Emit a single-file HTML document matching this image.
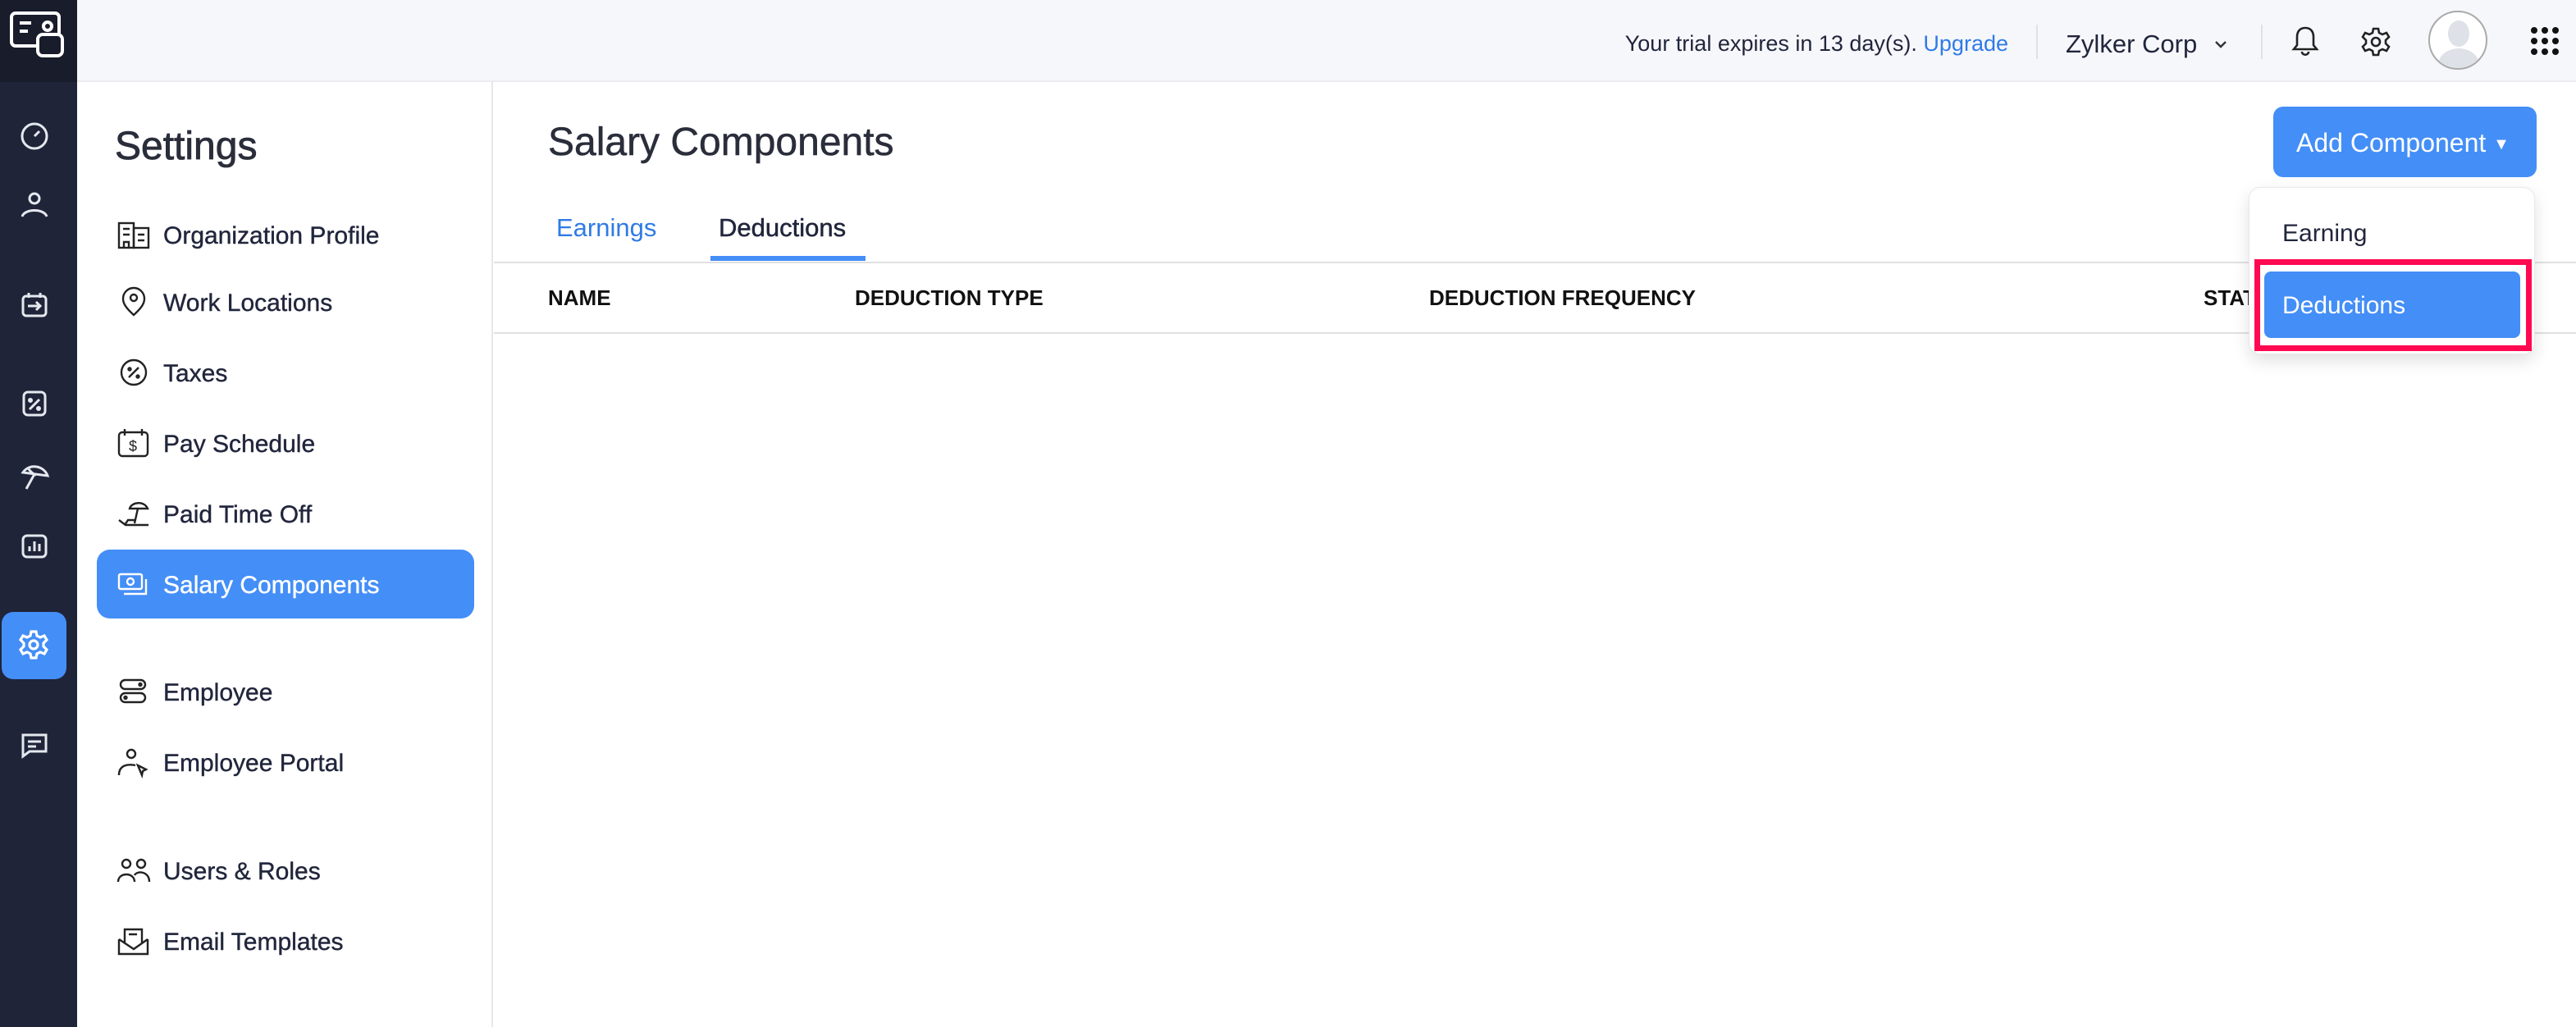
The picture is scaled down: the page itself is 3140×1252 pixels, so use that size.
<!DOCTYPE html>
<html><head><meta charset="utf-8"><style>
*{margin:0;padding:0;box-sizing:border-box}
body{width:3140px;height:1252px;position:relative;background:#fff;font-family:"Liberation Sans",sans-serif;color:#21263c;overflow:hidden}
.abs{position:absolute}
.nav{left:0;top:0;width:94px;height:1252px;background:#1f2439}
.logo{left:0;top:0;width:94px;height:100px;background:#181c2b}
.hdr{left:94px;top:0;width:3046px;height:100px;background:#f6f7fb;border-bottom:2px solid #ebecf0}
.side{left:94px;top:100px;width:507px;height:1152px;border-right:2px solid #e6e7eb}
.mi{position:absolute;left:199px;font-size:30px;color:#21263c;line-height:40px;-webkit-text-stroke:0.4px #21263c}
.ic{position:absolute;left:142px;width:42px;height:40px}
svg{overflow:visible}
.th{position:absolute;top:347px;font-size:26px;font-weight:bold;color:#111;line-height:32px}
</style></head><body>
<div class="abs nav"></div>
<div class="abs logo"><svg class="abs" style="left:12px;top:12px" width="70" height="70" viewBox="0 0 70 70" fill="none" stroke="#fff" stroke-width="4"><rect x="2" y="4" width="58" height="40" rx="5"/><path d="M12 16h14M12 26h10"/><circle cx="46" cy="20" r="5"/><rect x="34" y="30" width="30" height="26" rx="6" fill="#181c2b"/></svg></div>
<svg class="abs" style="left:22px;top:146px" width="40" height="40" viewBox="0 0 40 40" fill="none" stroke="#e6e8ef" stroke-width="3"><circle cx="20" cy="20" r="15"/><path d="M20 20l6-6"/></svg>
<svg class="abs" style="left:22px;top:230px" width="40" height="40" viewBox="0 0 40 40" fill="none" stroke="#e6e8ef" stroke-width="3"><circle cx="20" cy="12" r="6"/><path d="M5 34c3-10 27-10 30 0"/></svg>
<svg class="abs" style="left:22px;top:352px" width="40" height="40" viewBox="0 0 40 40" fill="none" stroke="#e6e8ef" stroke-width="3"><rect x="6" y="9" width="28" height="24" rx="4"/><path d="M13 5v6M27 5v6M12 21h14M22 16l5 5-5 5"/></svg>
<svg class="abs" style="left:22px;top:472px" width="40" height="40" viewBox="0 0 40 40" fill="none" stroke="#e6e8ef" stroke-width="3"><rect x="7" y="6" width="26" height="28" rx="5"/><path d="M14 27l12-12"/><circle cx="15" cy="16" r="1.5"/><circle cx="25" cy="26" r="1.5"/></svg>
<svg class="abs" style="left:22px;top:560px" width="40" height="40" viewBox="0 0 40 40" fill="none" stroke="#e6e8ef" stroke-width="3"><path d="M6 16c8-12 26-8 30 4L6 16zM20 18l-10 18M12 10c2 4 6 8 10 9"/></svg>
<svg class="abs" style="left:22px;top:646px" width="40" height="40" viewBox="0 0 40 40" fill="none" stroke="#e6e8ef" stroke-width="3"><rect x="6" y="7" width="28" height="26" rx="5"/><path d="M14 26v-6M20 26V14M26 26v-9"/></svg>
<div class="abs" style="left:2px;top:746px;width:79px;height:82px;background:#448ef7;border-radius:14px"></div>
<svg class="abs" style="left:21px;top:766px" width="40" height="40" viewBox="0 0 40 40" fill="none" stroke="#fff" stroke-width="3.2"><path d="M17 4h6l1 5 4 2 5-2 3 5-4 4v4l4 4-3 5-5-2-4 2-1 5h-6l-1-5-4-2-5 2-3-5 4-4v-4L4 14l3-5 5 2 4-2z"/><circle cx="20" cy="20" r="5"/></svg>
<svg class="abs" style="left:22px;top:888px" width="40" height="40" viewBox="0 0 40 40" fill="none" stroke="#e6e8ef" stroke-width="3"><path d="M6 8h28v20H14l-8 6z"/><path d="M12 16h16M12 22h10"/></svg>

<div class="abs hdr"></div>
<div class="abs" style="right:692px;top:38px;font-size:27px;color:#21263c">Your trial expires in 13 day(s). <span style="color:#2f7be6">Upgrade</span></div>
<div class="abs" style="left:2482px;top:30px;width:2px;height:42px;background:#e0e1e6"></div>
<div class="abs" style="left:2518px;top:36px;font-size:31px">Zylker Corp</div>
<svg class="abs" style="left:2698px;top:48px" width="18" height="12" viewBox="0 0 18 12" fill="none" stroke="#333" stroke-width="2.4"><path d="M3 3l6 6 6-6"/></svg>
<div class="abs" style="left:2756px;top:30px;width:2px;height:42px;background:#e0e1e6"></div>
<svg class="abs" style="left:2792px;top:30px" width="36" height="42" viewBox="0 0 36 42" fill="none" stroke="#222" stroke-width="2.6"><path d="M18 4c-7 0-10 5-10 11v10l-4 5h28l-4-5V15c0-6-3-11-10-11zM14 33c0 5 8 5 8 0"/></svg>
<svg class="abs" style="left:2876px;top:31px" width="40" height="40" viewBox="0 0 40 40" fill="none" stroke="#222" stroke-width="2.6"><path d="M17 4h6l1 5 4 2 5-2 3 5-4 4v4l4 4-3 5-5-2-4 2-1 5h-6l-1-5-4-2-5 2-3-5 4-4v-4L4 14l3-5 5 2 4-2z"/><circle cx="20" cy="20" r="5"/></svg>
<div class="abs" style="left:2960px;top:13px;width:72px;height:72px;border-radius:50%;border:2px solid #aaa;background:#fff;overflow:hidden"><div class="abs" style="left:22px;top:10px;width:26px;height:32px;border-radius:50%;background:#dfe1e8"></div><div class="abs" style="left:10px;top:44px;width:50px;height:40px;border-radius:50% 50% 0 0;background:#dfe1e8"></div></div>
<svg class="abs" style="left:3084px;top:32px" width="36" height="36" viewBox="0 0 36 36" fill="#111"><circle cx="5" cy="5" r="4"/><circle cx="18" cy="5" r="4"/><circle cx="31" cy="5" r="4"/><circle cx="5" cy="18" r="4"/><circle cx="18" cy="18" r="4"/><circle cx="31" cy="18" r="4"/><circle cx="5" cy="31" r="4"/><circle cx="18" cy="31" r="4"/><circle cx="31" cy="31" r="4"/></svg>

<div class="abs side"></div>
<div class="abs" style="left:140px;top:151px;font-size:48px;color:#2a2d3a;-webkit-text-stroke:0.8px #2a2d3a">Settings</div>
<div class="abs" style="left:118px;top:670px;width:460px;height:84px;background:#448ef7;border-radius:16px"></div>
<div class="mi" style="top:268px">Organization Profile</div>
<div class="mi" style="top:350px">Work Locations</div>
<div class="mi" style="top:436px">Taxes</div>
<div class="mi" style="top:522px">Pay Schedule</div>
<div class="mi" style="top:608px">Paid Time Off</div>
<div class="mi" style="top:694px;color:#fff;-webkit-text-stroke:0.4px #fff">Salary Components</div>
<div class="mi" style="top:825px">Employee</div>
<div class="mi" style="top:911px">Employee Portal</div>
<div class="mi" style="top:1043px">Users &amp; Roles</div>
<div class="mi" style="top:1129px">Email Templates</div>
<svg class="ic" style="top:266px" viewBox="0 0 42 40" fill="none" stroke="#222" stroke-width="2.4"><rect x="3" y="6" width="18" height="30"/><rect x="21" y="12" width="18" height="24"/><path d="M8 13h8M8 20h8M26 20h8M26 27h8M9 36v-7h6v7"/></svg>
<svg class="ic" style="top:348px" viewBox="0 0 42 40" fill="none" stroke="#222" stroke-width="2.4"><path d="M21 36C10 26 8 21 8 16a13 13 0 0126 0c0 5-2 10-13 20z"/><circle cx="21" cy="15" r="4"/></svg>
<svg class="ic" style="top:434px" viewBox="0 0 42 40" fill="none" stroke="#222" stroke-width="2.4"><circle cx="21" cy="20" r="15"/><path d="M15 26l12-12"/><circle cx="16" cy="16" r="1.5"/><circle cx="26" cy="25" r="1.5"/></svg>
<svg class="ic" style="top:520px" viewBox="0 0 42 40" fill="none" stroke="#222" stroke-width="2.4"><rect x="3" y="7" width="35" height="29" rx="4"/><path d="M10 3v8M31 3v8"/><text x="15" y="30" font-size="18" fill="#222" stroke="none" font-family="Liberation Sans">$</text></svg>
<svg class="ic" style="top:606px" viewBox="0 0 42 40" fill="none" stroke="#222" stroke-width="2.4"><path d="M16 14c2-8 18-10 22 0zM26 14l-4 18M3 28l8 6h28M10 34l4-6h8"/></svg>
<svg class="ic" style="top:692px" viewBox="0 0 42 40" fill="none" stroke="#fff" stroke-width="2.4"><rect x="3" y="8" width="28" height="18" rx="2"/><circle cx="17" cy="17" r="4"/><path d="M36 14v18H9"/></svg>
<svg class="ic" style="top:823px" viewBox="0 0 42 40" fill="none" stroke="#222" stroke-width="2.4"><rect x="5" y="6" width="30" height="11" rx="5.5"/><rect x="5" y="22" width="30" height="11" rx="5.5"/><circle cx="29" cy="11.5" r="1.5"/><circle cx="11" cy="27.5" r="1.5"/></svg>
<svg class="ic" style="top:909px" viewBox="0 0 42 40" fill="none" stroke="#222" stroke-width="2.4"><circle cx="18" cy="10" r="5"/><path d="M3 36c0-12 10-14 20-12M26 24l10 5-4 2-1 5z"/></svg>
<svg class="ic" style="top:1041px" viewBox="0 0 42 40" fill="none" stroke="#222" stroke-width="2.4"><circle cx="12" cy="12" r="5"/><circle cx="30" cy="12" r="5"/><path d="M2 34c0-12 20-12 20 0M22 26c3-6 18-5 18 8"/></svg>
<svg class="ic" style="top:1127px" viewBox="0 0 42 40" fill="none" stroke="#222" stroke-width="2.4"><path d="M3 18v18h35V18M10 22V6h21v16M3 18l18 12 17-12M15 12h10"/></svg>

<div class="abs" style="left:668px;top:146px;font-size:48px;color:#2a2d3a;-webkit-text-stroke:0.5px #2a2d3a">Salary Components</div>
<div class="abs" style="left:678px;top:260px;font-size:31px;color:#2f7be6">Earnings</div>
<div class="abs" style="left:876px;top:260px;font-size:31px;color:#21263c;-webkit-text-stroke:0.5px #21263c">Deductions</div>
<div class="abs" style="left:866px;top:312px;width:189px;height:6px;background:#448ef7"></div>
<div class="abs" style="left:602px;top:319px;width:2538px;height:2px;background:#e0e0e0"></div>
<div class="abs" style="left:602px;top:405px;width:2538px;height:2px;background:#e0e0e0"></div>
<div class="th" style="left:668px">NAME</div>
<div class="th" style="left:1042px">DEDUCTION TYPE</div>
<div class="th" style="left:1742px">DEDUCTION FREQUENCY</div>
<div class="th" style="left:2686px">STATUS</div>

<div class="abs" style="left:2771px;top:130px;width:321px;height:86px;background:#448ef7;border-radius:12px;color:#fff;font-size:32px;line-height:88px;padding-left:28px">Add Component <span style="font-size:20px;vertical-align:3px">▼</span></div>
<div class="abs" style="left:2741px;top:228px;width:349px;height:204px;background:#fff;border:1px solid #e8e8ee;border-radius:14px;box-shadow:0 8px 20px rgba(0,0,0,.12)"></div>
<div class="abs" style="left:2782px;top:268px;font-size:30px;color:#21263c">Earning</div>
<div class="abs" style="left:2748px;top:316px;width:338px;height:112px;border:7px solid #ff0a50"></div>
<div class="abs" style="left:2760px;top:331px;width:312px;height:81px;background:#448ef7;border-radius:8px;color:#fff;font-size:30px;line-height:83px;padding-left:22px">Deductions</div>
</body></html>
